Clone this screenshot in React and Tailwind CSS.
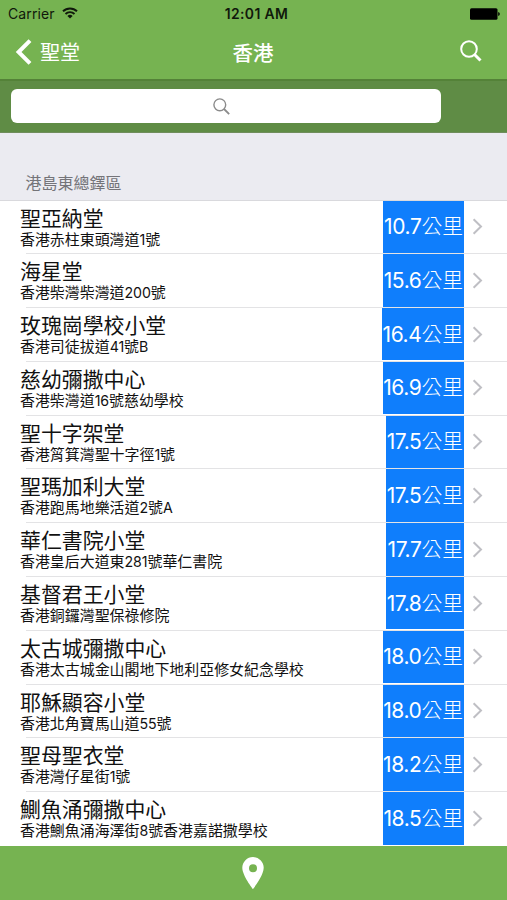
import React from "react";

const ROWS = [
  { name: "聖亞納堂", address: "香港赤柱東頭灣道1號", km: "10.7", box: "w-[81px]" },
  { name: "海星堂", address: "香港柴灣柴灣道200號", km: "15.6", box: "w-[81px]" },
  { name: "玫瑰崗學校小堂", address: "香港司徒拔道41號B", km: "16.4", box: "w-[82px]" },
  { name: "慈幼彌撒中心", address: "香港柴灣道16號慈幼學校", km: "16.9", box: "w-[81.5px]" },
  { name: "聖十字架堂", address: "香港筲箕灣聖十字徑1號", km: "17.5", box: "w-[78px]" },
  { name: "聖瑪加利大堂", address: "香港跑馬地樂活道2號A", km: "17.5", box: "w-[78px]" },
  { name: "華仁書院小堂", address: "香港皇后大道東281號華仁書院", km: "17.7", box: "w-[78px]" },
  { name: "基督君王小堂", address: "香港銅鑼灣聖保祿修院", km: "17.8", box: "w-[78px]" },
  { name: "太古城彌撒中心", address: "香港太古城金山閣地下地利亞修女紀念學校", km: "18.0", box: "w-[81.5px]" },
  { name: "耶穌顯容小堂", address: "香港北角寶馬山道55號", km: "18.0", box: "w-[81.5px]" },
  { name: "聖母聖衣堂", address: "香港灣仔星街1號", km: "18.2", box: "w-[81px]" },
  { name: "鰂魚涌彌撒中心", address: "香港鰂魚涌海澤街8號香港嘉諾撒學校", km: "18.5", box: "w-[81px]" },
];

function Address({ text }) {
  return (
    <div className="h-[18px] whitespace-nowrap text-[14.95px] leading-[18px]">
      {text.split(/([0-9A-Z]+)/).map((part, i) =>
        i % 2 ? (
          <span key={i} className="font-['Inter'] text-[14.2px] tracking-[-0.1px]">{part}</span>
        ) : (
          part
        )
      )}
    </div>
  );
}

function Row({ row, first }) {
  return (
    <li className="relative flex h-[53.8px] pl-5 pr-[23px]">
      {!first && <div className="absolute inset-x-0 left-[26px] -top-px h-px bg-[#e3e3e5]" />}
      <div className="min-w-0 flex-1 pt-[3px] text-[#111]">
        <div className="h-[26px] whitespace-nowrap text-[20.9px] leading-[26px]">{row.name}</div>
        <Address text={row.address} />
      </div>
      <div className={`${row.box} mb-[1.5px] flex shrink-0 items-baseline justify-end whitespace-nowrap bg-[#0f7efc] pt-[9.5px] pr-px font-light text-white`}>
        <span className="font-['Inter'] text-[21px] font-normal leading-[30px] tracking-[-0.4px]">{row.km}</span>
        <span className="text-[20.8px] leading-[30px]">公里</span>
      </div>
      <svg className="ml-[8px] mt-[17.5px] h-[17px] w-[12px] shrink-0" viewBox="0 0 12 17" fill="none" stroke="#bfbfc4" strokeWidth="2">
        <path d="M1.6 1.2 9 8.5 1.6 15.8" />
      </svg>
    </li>
  );
}

export default function App() {
  return (
    <div className="flex h-[900px] w-[507px] flex-col overflow-hidden bg-white font-['Noto_Sans_CJK_TC',sans-serif]">
      <header className="h-[79px] shrink-0 bg-[#76b351]">
        <div className="grid h-[27px] grid-cols-3 items-center pl-[8px] pr-[7px] font-['Inter'] text-[14px] text-[#10180b]">
          <div className="flex items-center gap-[7px]">
            <span className="tracking-[0.1px]">Carrier</span>
            <svg className="-mt-[2px] h-[12px] w-[16px]" viewBox="0 0 16 12" fill="none" stroke="currentColor" strokeWidth="1.9">
              <path d="M1 4.3a10 10 0 0 1 14 0M3.5 7a6.4 6.4 0 0 1 9 0" />
              <path d="M8 11.6 5.4 9a3.7 3.7 0 0 1 5.2 0z" fill="currentColor" stroke="none" />
            </svg>
          </div>
          <div className="whitespace-nowrap pl-[5px] pt-px text-center text-[13.9px] font-semibold tracking-[0.4px]">12:01 AM</div>
          <svg className="h-[12px] w-[30px] justify-self-end" viewBox="0 0 30 12" fill="#000">
            <rect x="0" y="0.3" width="27.5" height="11.4" rx="1.5" />
            <path d="M28.2 4q1.6.4 1.6 2t-1.6 2z" />
          </svg>
        </div>
        <div className="grid h-[50px] grid-cols-3 items-center pl-[15px] pr-[25px] text-white">
          <div className="flex items-center gap-[8px]">
            <svg className="h-[26px] w-[17px]" viewBox="0 0 17 26" fill="none" stroke="currentColor" strokeWidth="4">
              <path d="M15 1.7 3.6 13 15 24.3" />
            </svg>
            <span className="text-[20px] leading-[26px]">聖堂</span>
          </div>
          <h1 className="pl-[9px] text-center text-[20.5px] font-medium leading-[26px]">香港</h1>
          <svg className="mb-[2px] h-[22px] w-[22px] justify-self-end" viewBox="0 0 22 22" fill="none" stroke="currentColor">
            <circle cx="9" cy="9" r="7.8" strokeWidth="2" />
            <path d="m14.500 14.500 6 6" strokeWidth="3" />
          </svg>
        </div>
      </header>
      <div className="h-[54px] shrink-0 border-t-2 border-b border-t-[#548238] border-b-[#6f8d5c] bg-[#5f8c45] pl-[11px] pt-[8px]">
        <div className="flex h-[34px] w-[430px] items-center justify-center rounded-[6px] bg-white pr-[10px]">
          <svg className="h-[17px] w-[17px]" viewBox="0 0 17 17" fill="none" stroke="#8b8b8b" strokeWidth="1.4">
            <circle cx="6.8" cy="6.8" r="5.9" />
            <path d="m11 11 5.2 5.2" strokeWidth="1.8" />
          </svg>
        </div>
      </div>
      <div className="h-[67.5px] shrink-0 border-b border-[#d9d9dd] bg-[#ebebf1] pl-[25.5px] pt-[37px] text-[16px] leading-[24px] text-[#747479]">
        港島東總鐸區
      </div>
      <ul className="flex h-[645.5px] shrink-0 flex-col">
        {ROWS.map((row, i) => (
          <Row key={i} row={row} first={i === 0} />
        ))}
      </ul>
      <footer className="flex flex-1 justify-center bg-[#76b351] pr-[2px] pt-[11px]">
        <svg className="h-[32px] w-[22px]" viewBox="0 0 22 32" fill="#fff">
          <path fillRule="evenodd" d="M11 0A10.7 10.7 0 0 0 .3 10.7C.3 18.5 11 32 11 32s10.700-13.500 10.700-21.300A10.7 10.7 0 0 0 11 0Zm0 7.200a4 4 0 1 1 0 8 4 4 0 0 1 0-8Z" />
        </svg>
      </footer>
    </div>
  );
}
